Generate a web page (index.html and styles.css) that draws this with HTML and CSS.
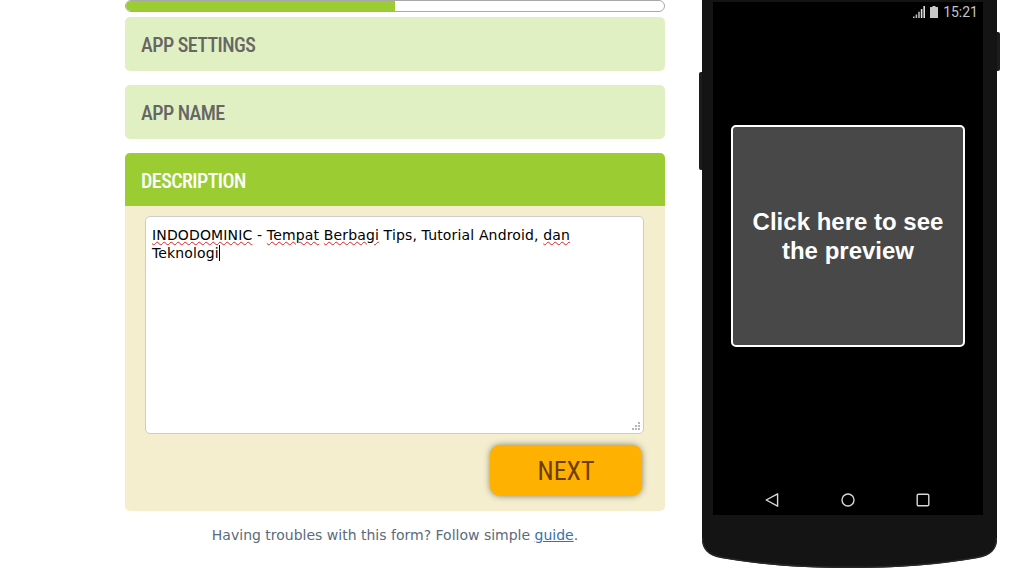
FILE: index.html
```html
<!DOCTYPE html>
<html>
<head>
    <title>App Description</title>
    <meta name="viewport" content="width=device-width, initial-scale=1">
    <link rel="stylesheet" href="styles.css">
</head>
<body>
    <div class="wrapper">
        <div class="form-column">
            <div class="progress"><div class="progress-fill"></div></div>

            <div class="step-header">APP SETTINGS</div>
            <div class="step-header">APP NAME</div>

            <div class="step-header active">DESCRIPTION</div>
            <div class="step-panel">
                <div class="description-input">
                    <span class="typo">INDODOMINIC</span> - <span class="typo">Tempat</span> <span class="typo">Berbagi</span> Tips, Tutorial Android, <span class="typo">dan</span> Teknologi<span class="caret"></span>
                    <svg class="grip" width="9" height="9" viewBox="0 0 9 9">
                        <path d="M6 0h2v2H6zM3 3h2v2H3zM6 3h2v2H6zM0 6h2v2H0zM3 6h2v2H3zM6 6h2v2H6z" fill="#b5b5b5"/>
                    </svg>
                </div>
                <div class="panel-actions">
                    <button class="next-btn">NEXT</button>
                </div>
            </div>

            <p class="help-text">Having troubles with this form? Follow simple <a href="#">guide</a>.</p>
        </div>

        <div class="phone">
            <div class="side-btn side-btn-left"></div>
            <div class="side-btn side-btn-right"></div>
            <div class="phone-body">
                <div class="screen">
                    <div class="status-bar">
                        <svg width="12" height="12" viewBox="0 0 12 12">
                            <path d="M0 12h1.6v-1.6H0zM2.6 12h1.6V8.4H2.6zM5.2 12h1.6V5.8H5.2z" fill="#bbb"/>
                            <path d="M7.8 12h1.6V3H7.8zM10.4 12H12V0h-1.6z" fill="#ddd"/>
                        </svg>
                        <svg width="8" height="12" viewBox="0 0 8 12">
                            <path d="M2.5 0h3v1H7.4a.6.6 0 0 1 .6.6V12H0V1.6A.6.6 0 0 1 .6 1h1.9z" fill="#c8c8c8"/>
                        </svg>
                        <span class="clock">15:21</span>
                    </div>
                    <div class="preview-box">Click here to see the preview</div>
                    <div class="nav-bar">
                        <svg width="14" height="14" viewBox="0 0 14 14">
                            <path d="M12.6 .8v12.400L1.200 7z" fill="none" stroke="#d8d8d8" stroke-width="1.400" stroke-linejoin="round"/>
                        </svg>
                        <svg width="14" height="14" viewBox="0 0 14 14">
                            <circle cx="7" cy="7" r="6" fill="none" stroke="#d8d8d8" stroke-width="1.400"/>
                        </svg>
                        <svg width="14" height="14" viewBox="0 0 14 14">
                            <rect x="1.200" y="1.200" width="11.600" height="11.600" rx="1.400" fill="none" stroke="#d8d8d8" stroke-width="1.400"/>
                        </svg>
                    </div>
                </div>
            </div>
            <svg class="phone-chin" width="295" height="53" viewBox="0 0 295 53">
                <path d="M0 0H295V23C295 34 289 40 275 43C235 50 195 53 147.500 53C100 53 60 50 20 43C6 40 0 34 0 23Z" fill="#141414"/>
                <path d="M.5 23C.5 34 6 40 20 42.500C60 49.500 100 52.300 147.500 52.300C195 52.300 235 49.500 275 42.500C289 40 294.500 34 294.500 23" fill="none" stroke="#282828" stroke-width="1.500"/>
            </svg>
        </div>
    </div>
</body>
</html>
```

FILE: styles.css
```css
body {
    margin: 0;
    background: #fff;
    font-family: "DejaVu Sans", Verdana, sans-serif;
    overflow: hidden;
}
.wrapper {
    display: flex;
    align-items: flex-start;
    gap: 37px;
    padding-left: 125px;
}
.form-column {
    width: 540px;
}
.progress {
    height: 10px;
    background: #fff;
    border: 1px solid #a8a8a8;
    border-radius: 6px;
    overflow: hidden;
    margin-bottom: 5px;
}
.progress-fill {
    width: 50%;
    height: 100%;
    background: #9bcd33;
}
.step-header {
    height: 54px;
    line-height: 56px;
    padding-left: 16px;
    margin-bottom: 14px;
    background: #e1f0c2;
    border-radius: 5px;
    color: #666;
    font-family: "Roboto", sans-serif;
    font-size: 20px;
    font-weight: 500;
    font-stretch: 75%;
    letter-spacing: -0.55px;
}
.step-header.active {
    height: 53px;
    margin-bottom: 0;
    background: #9bcd33;
    border-radius: 5px 5px 0 0;
    color: #fff;
}
.step-panel {
    height: 305px;
    box-sizing: border-box;
    padding: 10px 21px 0 20px;
    background: #f4eecf;
    border-radius: 0 0 5px 5px;
}
.description-input {
    position: relative;
    height: 218px;
    box-sizing: border-box;
    padding: 9px 40px 9px 6px;
    background: #fff;
    border: 1px solid #ccc;
    border-radius: 5px;
    color: #000;
    font-size: 14px;
    letter-spacing: 0.15px;
    line-height: 18px;
}
.typo {
    text-decoration: underline wavy #e02020 1px;
    text-underline-offset: 1px;
}
.caret {
    display: inline-block;
    width: 1px;
    height: 16px;
    background: #000;
    vertical-align: -3px;
}
.grip {
    position: absolute;
    right: 2px;
    bottom: 2px;
}
.panel-actions {
    display: flex;
    justify-content: flex-end;
    margin-top: 11px;
    padding-right: 2px;
}
.next-btn {
    width: 152px;
    height: 51px;
    padding: 0;
    background: #ffb100;
    border: none;
    border-radius: 10px;
    box-shadow: 0 0 6px rgba(70,60,30,0.6);
    color: #6b3d00;
    font-family: "Roboto", sans-serif;
    font-size: 26px;
    font-stretch: 75%;
    cursor: pointer;
}
.help-text {
    margin: 15px 0 0;
    text-align: center;
    color: #5b6b7b;
    font-size: 14px;
    line-height: 18px;
}
.help-text a {
    color: #3a70ad;
}
.phone {
    position: relative;
    width: 295px;
}
.phone-body {
    height: 515px;
    box-sizing: border-box;
    padding: 2px 14px 0 11px;
    background: #141414;
}
.phone-chin {
    display: block;
}
.side-btn {
    position: absolute;
    width: 3px;
    background: #1c1c1c;
}
.side-btn-left {
    left: -3px;
    top: 72px;
    height: 98px;
    border-radius: 2px 0 0 2px;
}
.side-btn-right {
    right: -3px;
    top: 32px;
    height: 39px;
    border-radius: 0 2px 2px 0;
}
.screen {
    height: 513px;
    display: flex;
    flex-direction: column;
    background: #000;
}
.status-bar {
    height: 20px;
    display: flex;
    align-items: center;
    justify-content: flex-end;
    gap: 5px;
    padding: 0 5px 1px 0;
}
.clock {
    color: #c4c4c4;
    font-family: "Roboto", sans-serif;
    font-size: 14px;
}
.preview-box {
    width: 234px;
    height: 222px;
    box-sizing: border-box;
    margin: 102px 0 0 18px;
    padding: 0 14px;
    display: flex;
    align-items: center;
    text-align: center;
    background: #484848;
    border: 2px solid #fff;
    border-radius: 5px;
    color: #fff;
    font-family: "Liberation Sans", Arial, sans-serif;
    font-size: 24px;
    font-weight: bold;
    line-height: 29px;
}
.nav-bar {
    display: flex;
    justify-content: space-between;
    padding: 0 53px 0 52px;
    margin-top: 146px;
}
```
